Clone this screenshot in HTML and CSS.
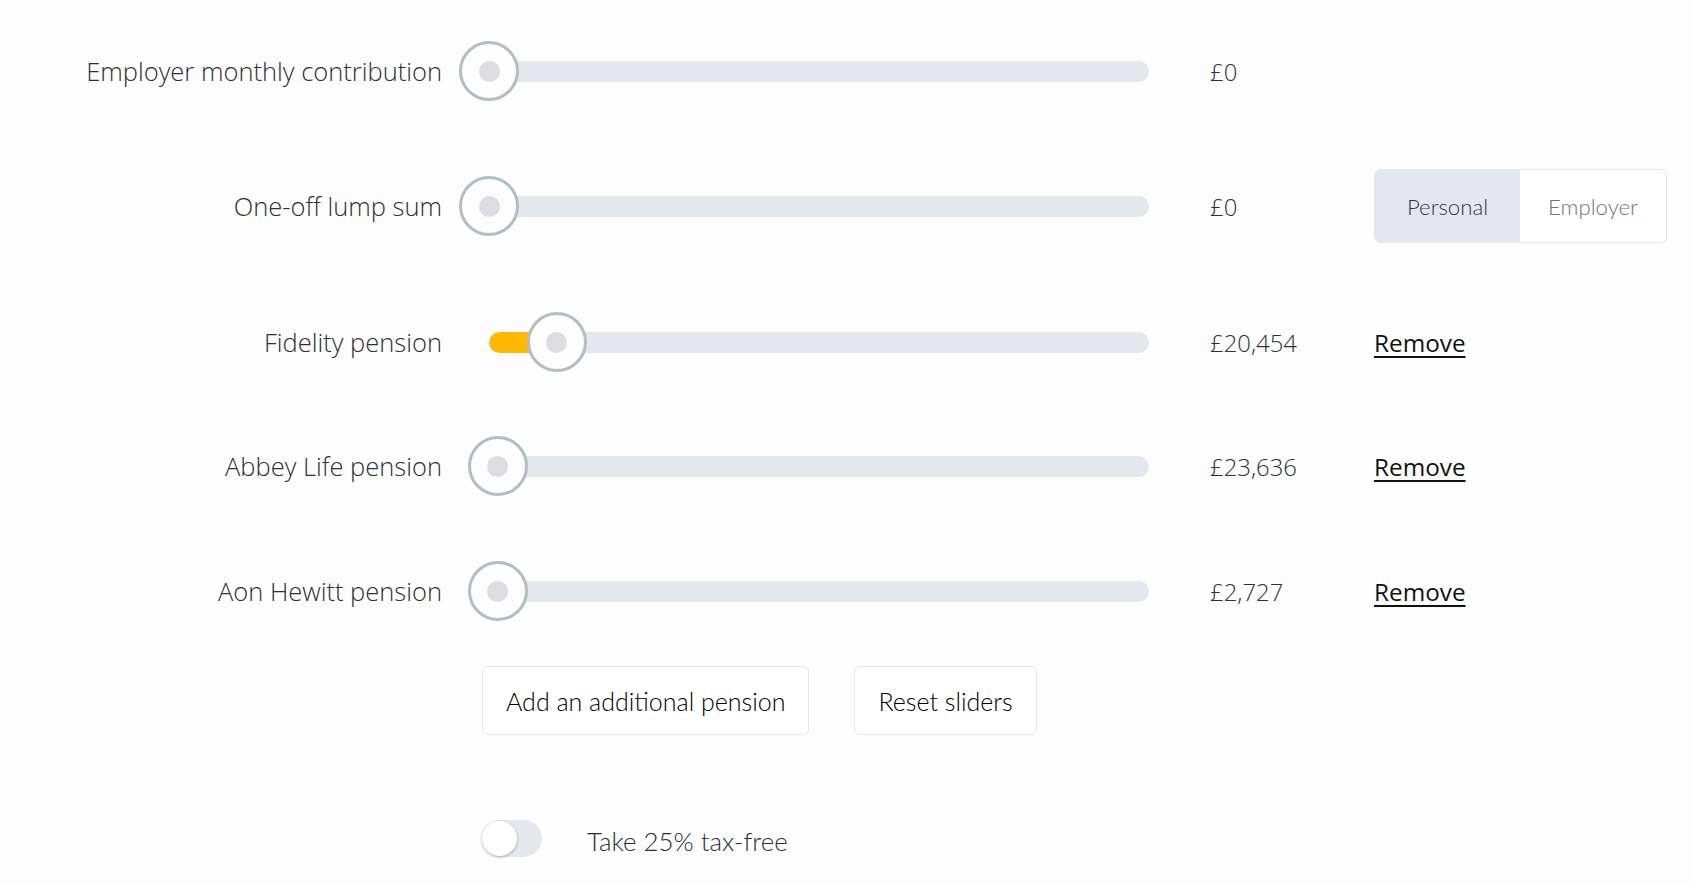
FILE: index.html
```html
<!DOCTYPE html>
<html lang="en">
<head>
<meta charset="utf-8">
<title>Pension calculator</title>
<link rel="stylesheet" href="styles.css">
</head>
<body>
<main class="calc">
  <div class="row row--first">
    <span class="label">Employer monthly contribution</span>
    <div class="slider" style="--p:0">
      <div class="track"><div class="fill"></div></div>
      <div class="thumb"></div>
    </div>
    <span class="value">£0</span>
    <div class="action"></div>
  </div>

  <div class="row row--tall">
    <span class="label">One-off lump sum</span>
    <div class="slider" style="--p:0">
      <div class="track"><div class="fill"></div></div>
      <div class="thumb"></div>
    </div>
    <span class="value">£0</span>
    <div class="action">
      <div class="segmented">
        <button class="seg seg--active" type="button">Personal</button>
        <button class="seg" type="button">Employer</button>
      </div>
    </div>
  </div>

  <div class="row row--after-tall">
    <span class="label">Fidelity pension</span>
    <div class="slider" style="--p:0.103">
      <div class="track"><div class="fill"></div></div>
      <div class="thumb"></div>
    </div>
    <span class="value">£20,454</span>
    <div class="action"><a class="remove" href="#">Remove</a></div>
  </div>

  <div class="row">
    <span class="label">Abbey Life pension</span>
    <div class="slider" style="--p:0.013">
      <div class="track"><div class="fill"></div></div>
      <div class="thumb"></div>
    </div>
    <span class="value">£23,636</span>
    <div class="action"><a class="remove" href="#">Remove</a></div>
  </div>

  <div class="row row--last">
    <span class="label">Aon Hewitt pension</span>
    <div class="slider" style="--p:0.013">
      <div class="track"><div class="fill"></div></div>
      <div class="thumb"></div>
    </div>
    <span class="value">£2,727</span>
    <div class="action"><a class="remove" href="#">Remove</a></div>
  </div>

  <div class="buttons">
    <button class="btn" type="button">Add an additional pension</button>
    <button class="btn" type="button">Reset sliders</button>
  </div>

  <div class="taxfree">
    <span class="switch"><span class="knob"></span></span>
    <span class="taxfree-label">Take 25% tax-free</span>
  </div>
</main>
</body>
</html>
```
FILE: styles.css
```css
html, body {
  margin: 0;
  padding: 0;
  background: #fdfdfe;
}

body {
  font-family: "Open Sans", "Noto Sans", sans-serif;
  color: #383a3f;
  width: 1692px;
  height: 883px;
  overflow: hidden;
}

.calc {
  display: flex;
  flex-direction: column;
  padding-top: 41px;
}

.row {
  display: flex;
  align-items: center;
  height: 60px;
  margin-top: 64px;
}

.row--first { margin-top: 0; }
.row--tall { height: 74px; margin-top: 68px; }
.row--after-tall { margin-top: 69px; }
.row--last { margin-top: 65px; }

.label {
  flex: none;
  width: 442px;
  text-align: right;
  font-weight: 300;
  font-size: 25.5px;
  color: #2e3035;
  white-space: nowrap;
}

.slider {
  position: relative;
  flex: none;
  width: 690px;
  height: 60px;
  margin-left: 17px;
  padding-left: 30px;
  box-sizing: border-box;
  display: flex;
  align-items: center;
}

.track {
  flex: 1;
  height: 21px;
  border-radius: 11px;
  background: #e4e7ee;
  overflow: hidden;
}

.fill {
  height: 100%;
  width: calc(var(--p) * 100%);
  background: #ffb900;
  border-radius: 11px 0 0 11px;
}

.thumb {
  position: absolute;
  top: 0;
  left: calc(var(--p) * 660px);
  width: 60px;
  height: 60px;
  box-sizing: border-box;
  border: 3px solid #b3bec3;
  border-radius: 50%;
  background: #fdfdfe;
  display: flex;
  align-items: center;
  justify-content: center;
}

.thumb::after {
  content: "";
  width: 21px;
  height: 21px;
  border-radius: 50%;
  background: #dcdce1;
}

.value {
  flex: none;
  width: 164px;
  margin-left: 61px;
  font-weight: 300;
  font-size: 23.9px;
  color: #2e3035;
  white-space: nowrap;
}

.action {
  flex: none;
  display: flex;
  align-items: center;
}

.remove {
  font-weight: 400;
  font-size: 24.3px;
  color: #111;
  text-decoration: underline;
  text-decoration-thickness: 2px;
  text-underline-offset: 4px;
}

.segmented {
  display: flex;
  height: 74px;
  box-sizing: border-box;
  border: 1px solid #e4e6ee;
  border-radius: 6px;
  overflow: hidden;
  background: #fff;
}

.seg {
  border: 0;
  margin: 0;
  padding: 0;
  width: 145px;
  background: transparent;
  font-family: "Lato", sans-serif;
  font-weight: 300;
  font-size: 22.2px;
  color: #6f7279;
  cursor: pointer;
}

.seg + .seg { width: 146px; }

.seg--active {
  background: #e4e7ee;
  color: #33363d;
}

.buttons {
  display: flex;
  gap: 45px;
  margin-left: 482px;
  margin-top: 45px;
}

.btn {
  height: 69px;
  box-sizing: border-box;
  padding: 0 23px;
  border: 1px solid #e5e7ee;
  border-radius: 6px;
  background: #fff;
  font-family: "Lato", sans-serif;
  font-weight: 300;
  font-size: 25px;
  color: #000;
  cursor: pointer;
}

.taxfree {
  display: flex;
  align-items: center;
  gap: 45px;
  margin-left: 482px;
  margin-top: 84px;
}

.switch {
  position: relative;
  flex: none;
  width: 60px;
  height: 37px;
  border-radius: 19px;
  background: #e4e7ee;
}

.knob {
  position: absolute;
  left: 0;
  top: 1px;
  width: 35px;
  height: 35px;
  border-radius: 50%;
  background: #fff;
  box-shadow: 0 1px 3px rgba(0, 0, 0, 0.3);
}

.taxfree-label {
  font-family: "Lato", sans-serif;
  font-weight: 300;
  font-size: 25.9px;
  color: #2a2c31;
  padding-top: 6px;
}
```
